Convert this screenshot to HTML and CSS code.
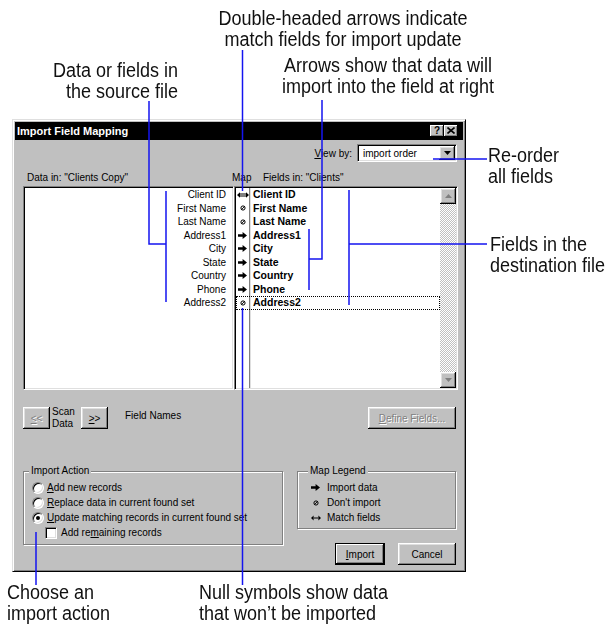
FILE: index.html
```html
<!DOCTYPE html>
<html lang="en">
<head>
<meta charset="utf-8">
<title>Import Field Mapping</title>
<link rel="stylesheet" href="styles.css">
</head>
<body>
<div class="page">
  <div class="dialog">
    <div class="titlebar">
      <span class="title">Import Field Mapping</span>
      <span class="cap-btn help">?</span>
      <span class="cap-btn close"><svg width="8" height="7" viewBox="0 0 8 7"><path d="M0.5 0.5 7.5 6.5M7.5 0.5 0.5 6.5" stroke="#000" stroke-width="1.6"/></svg></span>
    </div>
    <div class="body">
      <div class="viewrow">
        <span><u>V</u>iew by:</span>
        <div class="combo sunken">
          <span class="combo-text">import order</span>
          <span class="combo-btn raised"><svg width="7" height="4" viewBox="0 0 7 4"><path d="M0 0h7L3.5 4z"/></svg></span>
        </div>
      </div>
      <div class="headrow">
        <span class="h-data">Data in: "Clients Copy"</span>
        <span>Map</span>
        <span>Fields in: "Clients"</span>
      </div>
      <div class="lists">
        <div class="list src sunken">
          <div class="src-item">Client ID</div>
          <div class="src-item">First Name</div>
          <div class="src-item">Last Name</div>
          <div class="src-item">Address1</div>
          <div class="src-item">City</div>
          <div class="src-item">State</div>
          <div class="src-item">Country</div>
          <div class="src-item">Phone</div>
          <div class="src-item">Address2</div>
        </div>
        <div class="list dst sunken">
          <div class="dst-rows">
            <div class="row"><span class="sym"><svg width="12" height="6" viewBox="0 0 12 6"><path d="M0 3 3 0.3v5.4zM12 3 9 0.3v5.4z"/><path d="M3 2h6M3 4h6" stroke="#000" stroke-width="1"/></svg></span><span class="fname">Client ID</span></div>
            <div class="row"><span class="sym"><svg width="6" height="6" viewBox="0 0 6 6"><circle cx="3" cy="3" r="2.1" fill="none" stroke="#000" stroke-width="1"/><path d="M1.2 4.8 4.8 1.2" stroke="#000" stroke-width="0.9"/></svg></span><span class="fname">First Name</span></div>
            <div class="row"><span class="sym"><svg width="6" height="6" viewBox="0 0 6 6"><circle cx="3" cy="3" r="2.1" fill="none" stroke="#000" stroke-width="1"/><path d="M1.2 4.8 4.8 1.2" stroke="#000" stroke-width="0.9"/></svg></span><span class="fname">Last Name</span></div>
            <div class="row"><span class="sym"><svg width="9" height="7" viewBox="0 0 9 7"><path d="M0 2.2h4.6V0L9 3.5 4.6 7V4.8H0z"/></svg></span><span class="fname">Address1</span></div>
            <div class="row"><span class="sym"><svg width="9" height="7" viewBox="0 0 9 7"><path d="M0 2.2h4.6V0L9 3.5 4.6 7V4.8H0z"/></svg></span><span class="fname">City</span></div>
            <div class="row"><span class="sym"><svg width="9" height="7" viewBox="0 0 9 7"><path d="M0 2.2h4.6V0L9 3.5 4.6 7V4.8H0z"/></svg></span><span class="fname">State</span></div>
            <div class="row"><span class="sym"><svg width="9" height="7" viewBox="0 0 9 7"><path d="M0 2.2h4.6V0L9 3.5 4.6 7V4.8H0z"/></svg></span><span class="fname">Country</span></div>
            <div class="row"><span class="sym"><svg width="9" height="7" viewBox="0 0 9 7"><path d="M0 2.2h4.6V0L9 3.5 4.6 7V4.8H0z"/></svg></span><span class="fname">Phone</span></div>
            <div class="row focus"><span class="sym"><svg width="6" height="6" viewBox="0 0 6 6"><circle cx="3" cy="3" r="2.1" fill="none" stroke="#000" stroke-width="1"/><path d="M1.2 4.8 4.8 1.2" stroke="#000" stroke-width="0.9"/></svg></span><span class="fname">Address2</span></div>
          </div>
          <div class="scrollbar">
            <span class="sbtn raised"><svg width="7" height="4" viewBox="0 0 7 4"><path d="M0 4h7L3.5 0z" fill="#808080"/></svg></span>
            <span class="track"></span>
            <span class="sbtn raised"><svg width="7" height="4" viewBox="0 0 7 4"><path d="M0 0h7L3.5 4z" fill="#808080"/></svg></span>
          </div>
        </div>
      </div>
      <div class="scanrow">
        <span class="btn raised btn-sm disabled"><u>&lt;</u>&lt;</span>
        <span class="scanlbl">Scan<br>Data</span>
        <span class="btn raised btn-sm btn-next"><u>&gt;</u>&gt;</span>
        <span class="fieldnames">Field Names</span>
        <span class="btn raised btn-define disabled"><u>D</u>efine Fields...</span>
      </div>
      <div class="bottom">
        <fieldset class="group actions">
          <legend>Import Action</legend>
          <div class="opt"><span class="radio"></span><span><u>A</u>dd new records</span></div>
          <div class="opt"><span class="radio"></span><span><u>R</u>eplace data in current found set</span></div>
          <div class="opt"><span class="radio on"></span><span><u>U</u>pdate matching records in current found set</span></div>
          <div class="opt sub"><span class="check sunken"></span><span>Add re<u>m</u>aining records</span></div>
        </fieldset>
        <div class="rightcol">
          <fieldset class="group maplegend">
            <legend>Map Legend</legend>
            <div class="lg-row"><svg width="9" height="7" viewBox="0 0 9 7"><path d="M0 2.2h4.6V0L9 3.5 4.6 7V4.8H0z"/></svg><span>Import data</span></div>
            <div class="lg-row"><svg class="lg-null" width="6" height="6" viewBox="0 0 6 6"><circle cx="3" cy="3" r="2.1" fill="none" stroke="#000" stroke-width="1"/><path d="M1.2 4.8 4.8 1.2" stroke="#000" stroke-width="0.9"/></svg><span>Don't import</span></div>
            <div class="lg-row"><svg width="10" height="6" viewBox="0 0 10 6"><path d="M0 3 2.6 0.6v4.8zM10 3 7.4 0.6v4.8z"/><path d="M2.6 3h4.8" stroke="#000" stroke-width="1"/></svg><span>Match fields</span></div>
          </fieldset>
          <div class="btnrow">
            <span class="btn btn-import"><u>I</u>mport</span>
            <span class="btn raised btn-cancel">Cancel</span>
          </div>
        </div>
      </div>
    </div>
  </div>

  <div class="note n-double">Double-headed arrows indicate<br>match fields for import update</div>
  <div class="note n-data">Data or fields in<br>the source file</div>
  <div class="note n-arrows">Arrows show that data will<br>import into the field at right</div>
  <div class="note n-reorder">Re-order<br>all fields</div>
  <div class="note n-fields">Fields in the<br>destination file</div>
  <div class="note n-choose">Choose an<br>import action</div>
  <div class="note n-null">Null symbols show data<br>that won’t be imported</div>

  <svg class="leaders" width="609" height="624" viewBox="0 0 609 624">
    <g stroke="#1414f0" stroke-width="1.5" fill="none">
      <path d="M242.5 50V191"/>
      <path d="M149 101V244H166M166 191V302"/>
      <path d="M322 100V259H309M309 229V290"/>
      <path d="M349 190V305M349 244H487"/>
      <path d="M433 159H487"/>
      <path d="M36 532V585"/>
      <path d="M242.5 308V585"/>
    </g>
  </svg>
</div>
</body>
</html>
```

FILE: styles.css
```css
* { box-sizing: border-box; }

body {
  margin: 0;
  background: #fff;
}

.page {
  position: relative;
  width: 609px;
  height: 624px;
  overflow: hidden;
  padding: 119px 0 0 12px;
  font-family: "Liberation Sans", Arial, sans-serif;
  color: #000;
}

/* ---------- dialog frame ---------- */
.dialog {
  width: 454px;
  height: 453px;
  background: #c0c0c0;
  border: 1px solid;
  border-color: #dfdfdf #000 #000 #dfdfdf;
  box-shadow: inset 1px 1px #fff, inset -1px -1px #808080;
  padding: 2px;
  display: flex;
  flex-direction: column;
}

.raised {
  background: #c0c0c0;
  box-shadow: inset -1px -1px #000, inset 1px 1px #fff, inset -2px -2px #808080, inset 2px 2px #dfdfdf;
}

.sunken {
  background: #fff;
  border: 1px solid;
  border-color: #808080 #fff #fff #808080;
  box-shadow: inset 1px 1px #000, inset -1px -1px #dfdfdf;
  padding: 1px;
}

.titlebar {
  height: 18px;
  background: #000;
  display: flex;
  align-items: center;
  padding: 0 5px 0 2px;
}

.title {
  flex: 1;
  color: #fff;
  font-weight: bold;
  font-size: 11px;
}

.cap-btn {
  width: 14px;
  height: 12px;
  background: #c0c0c0;
  box-shadow: inset -1px -1px #000, inset 1px 1px #fff, inset -2px -2px #808080;
  display: flex;
  align-items: center;
  justify-content: center;
  font-weight: bold;
  font-size: 10px;
  line-height: 10px;
}

.cap-btn.close svg { margin-top: -1px; }

/* ---------- body ---------- */
.body {
  flex: 1;
  display: flex;
  flex-direction: column;
  padding: 4px 5px 0 8px;
  font-size: 10px;
}

.viewrow {
  display: flex;
  justify-content: flex-end;
  align-items: center;
  gap: 5px;
  height: 18px;
  padding-right: 1px;
}

.combo {
  width: 100px;
  height: 18px;
  display: flex;
  align-items: center;
}

.combo-text {
  flex: 1;
  padding-left: 4px;
}

.combo-btn {
  width: 16px;
  height: 14px;
  display: flex;
  align-items: center;
  justify-content: center;
}

.headrow {
  display: grid;
  grid-template-columns: 209px 31px 1fr;
  margin-top: 10px;
  height: 12px;
  line-height: 12px;
}

.h-data { padding-left: 4px; }

.lists {
  display: flex;
  margin-top: 2px;
  height: 204px;
}

.src {
  width: 211px;
  padding-right: 7px;
}

.src-item {
  height: 13.5px;
  line-height: 13.5px;
  text-align: right;
}

.dst {
  width: 224px;
  display: flex;
}

.dst-rows {
  flex: 1;
  background: linear-gradient(90deg, #fff 13px, #808080 13px, #808080 14px, #dfdfdf 14px, #dfdfdf 15px, #fff 15px);
}

.row {
  display: grid;
  grid-template-columns: 13px 1fr;
  height: 13.5px;
  align-items: center;
}

.row.focus {
  outline: 1px dotted #000;
  outline-offset: -1px;
}

.sym {
  display: flex;
  justify-content: center;
  align-items: center;
}

.fname {
  padding-left: 4px;
  font-weight: bold;
  font-size: 10.5px;
  line-height: 13.5px;
}

.scrollbar {
  width: 16px;
  display: flex;
  flex-direction: column;
  background-color: #fff;
  background-image: repeating-conic-gradient(#c0c0c0 0 25%, #fff 0 50%);
  background-size: 2px 2px;
}

.sbtn {
  height: 16px;
  display: flex;
  align-items: center;
  justify-content: center;
}

.track { flex: 1; }

/* ---------- scan row ---------- */
.scanrow {
  display: flex;
  align-items: center;
  margin-top: 17px;
  height: 22px;
}

.btn {
  height: 22px;
  display: flex;
  align-items: center;
  justify-content: center;
  font-size: 10px;
}

.btn-sm { width: 27px; }

.disabled {
  color: #808080;
  text-shadow: 1px 1px #fff;
}

.scanlbl {
  margin-left: 2px;
  width: 25px;
  line-height: 12px;
}

.btn-next { margin-left: 4px; }

.fieldnames {
  margin-left: 17px;
  align-self: flex-start;
  margin-top: 3px;
}

.btn-define {
  margin-left: auto;
  margin-right: 2px;
  width: 88px;
}

/* ---------- bottom groups ---------- */
.bottom {
  display: grid;
  grid-template-columns: 260px 159px;
  column-gap: 14px;
  margin-top: 36px;
  align-items: start;
}

.group {
  margin: 0;
  min-width: 0;
  border: 1px solid #808080;
  box-shadow: inset 1px 1px #fff, 1px 1px #fff;
}

.group legend {
  font-size: 10px;
  line-height: 12px;
  padding: 0 2px;
  margin-left: -3px;
  background: #c0c0c0;
}

.actions {
  padding: 3px 4px 4px 8px;
}

.opt {
  display: flex;
  align-items: center;
  gap: 3px;
  height: 15px;
}

.opt.sub {
  gap: 4px;
  padding-left: 13px;
}

.radio {
  position: relative;
  width: 12px;
  height: 12px;
  border-radius: 50%;
  background: #fff;
  border: 1px solid;
  border-color: #808080 #fff #fff #808080;
  box-shadow: inset 1px 1px #000, inset -1px -1px #dfdfdf;
}

.radio.on::after {
  content: "";
  position: absolute;
  left: 3px;
  top: 3px;
  width: 4px;
  height: 4px;
  border-radius: 50%;
  background: #000;
}

.check {
  width: 12px;
  height: 12px;
}

.maplegend {
  padding: 3px 4px 3px 13px;
}

.lg-row {
  display: grid;
  grid-template-columns: 10px 1fr;
  column-gap: 6px;
  align-items: center;
  height: 15px;
}

.lg-null { margin-left: 2px; }

.btnrow {
  display: flex;
  justify-content: flex-end;
  gap: 13px;
  margin-top: 14px;
}

.btn-import {
  width: 50px;
  background: #c0c0c0;
  border: 1px solid #000;
  box-shadow: inset -1px -1px #000, inset 1px 1px #fff, inset -2px -2px #808080;
}

.btn-cancel { width: 58px; }

/* ---------- callouts ---------- */
.note {
  position: absolute;
  font-family: "Liberation Sans", Arial, sans-serif;
  font-size: 20px;
  line-height: 21px;
  color: #111;
  white-space: nowrap;
  transform: scaleX(0.9);
  transform-origin: left top;
}

.n-double { left: 200px; top: 8px; width: 286px; text-align: center; transform-origin: center top; }
.n-data { left: 28px; top: 60px; width: 150px; text-align: right; transform-origin: right top; }
.n-arrows { left: 268px; top: 55px; width: 240px; text-align: center; transform-origin: center top; }
.n-reorder { left: 488px; top: 145px; }
.n-fields { left: 490px; top: 234px; }
.n-choose { left: 7px; top: 582px; }
.n-null { left: 199px; top: 582px; }

.leaders {
  position: absolute;
  left: 0;
  top: 0;
  pointer-events: none;
}
```
